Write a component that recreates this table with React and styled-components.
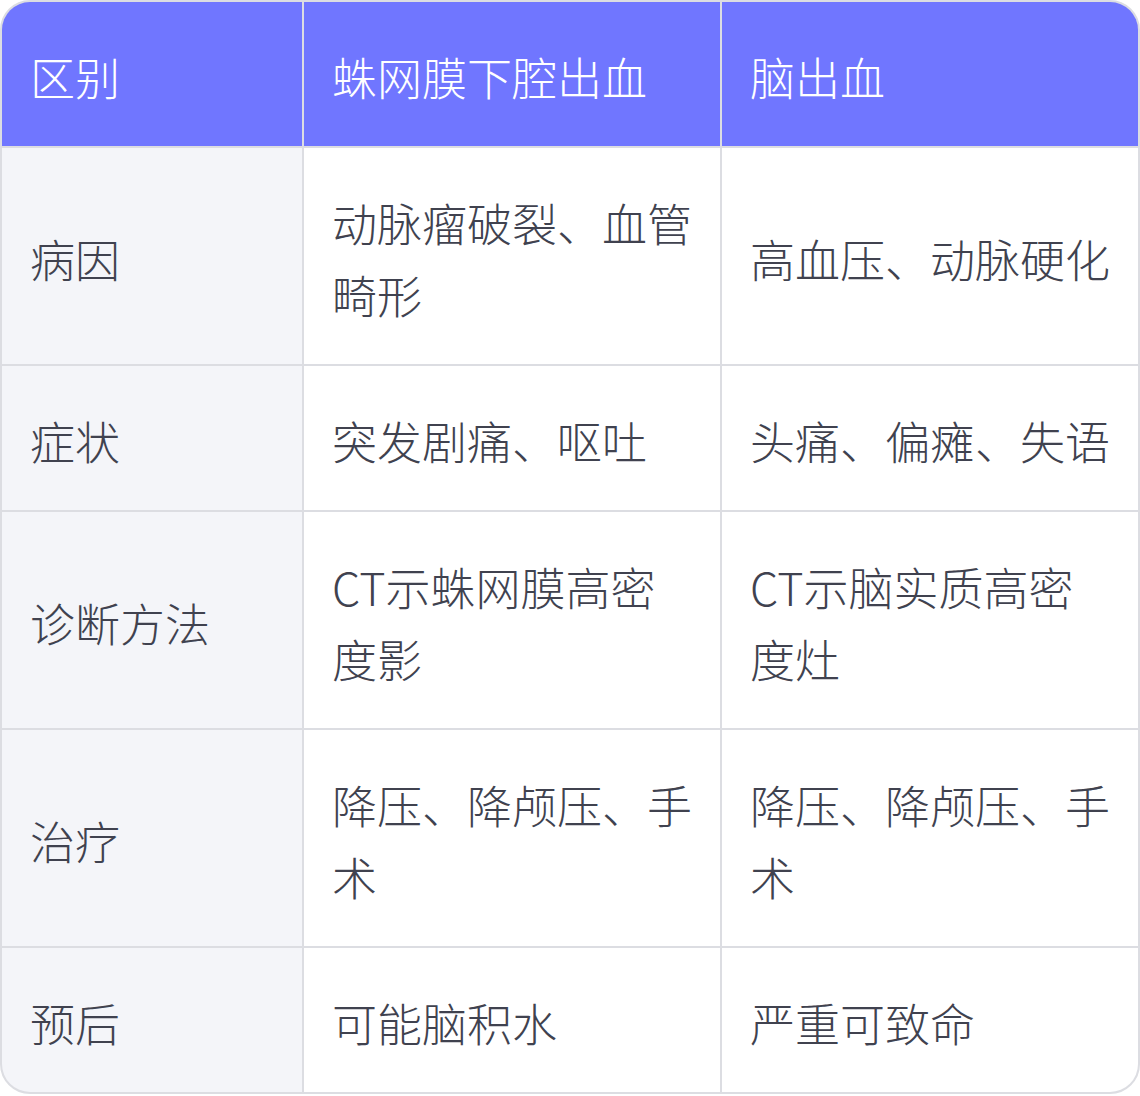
import styled, { createGlobalStyle } from 'styled-components'

const GlobalStyle = createGlobalStyle`
body {
  margin: 0;
  background: #ffffff;
  font-family: "Noto Sans CJK SC", "Noto Sans", sans-serif;
}
`

const StyledTable = styled('div')`
display: grid;
grid-template-columns: 300px 416px 1fr;
gap: 2px;
width: 1140px;
box-sizing: border-box;
background-color: #dcdde2;
border: 2px solid #dcdde2;
border-radius: 30px;
overflow: hidden;
`

const StyledCell = styled('div')`
display: flex;
align-items: center;
padding: 39px 24px 33px 28px;
font-size: 45px;
line-height: 72px;
font-weight: 300;
color: ${({ $head }) => ($head ? '#ffffff' : '#40424f')};
background-color: ${({ $head, $label }) =>
  $head ? '#7076ff' : $label ? '#f4f5f9' : '#ffffff'};
`

const head = ['区别', '蛛网膜下腔出血', '脑出血']

const rows = [
  ['病因', '动脉瘤破裂、血管畸形', '高血压、动脉硬化'],
  ['症状', '突发剧痛、呕吐', '头痛、偏瘫、失语'],
  ['诊断方法', 'CT示蛛网膜高密度影', 'CT示脑实质高密度灶'],
  ['治疗', '降压、降颅压、手术', '降压、降颅压、手术'],
  ['预后', '可能脑积水', '严重可致命'],
]

function App() {
  return (
    <>
      <GlobalStyle />
      <StyledTable>
        {head.map((h) => (
          <StyledCell key={h} $head>{h}</StyledCell>
        ))}
        {rows.map((row) =>
          row.map((text, i) => (
            <StyledCell key={row[0] + i} $label={i === 0}>{text}</StyledCell>
          ))
        )}
      </StyledTable>
    </>
  )
}

export default App
